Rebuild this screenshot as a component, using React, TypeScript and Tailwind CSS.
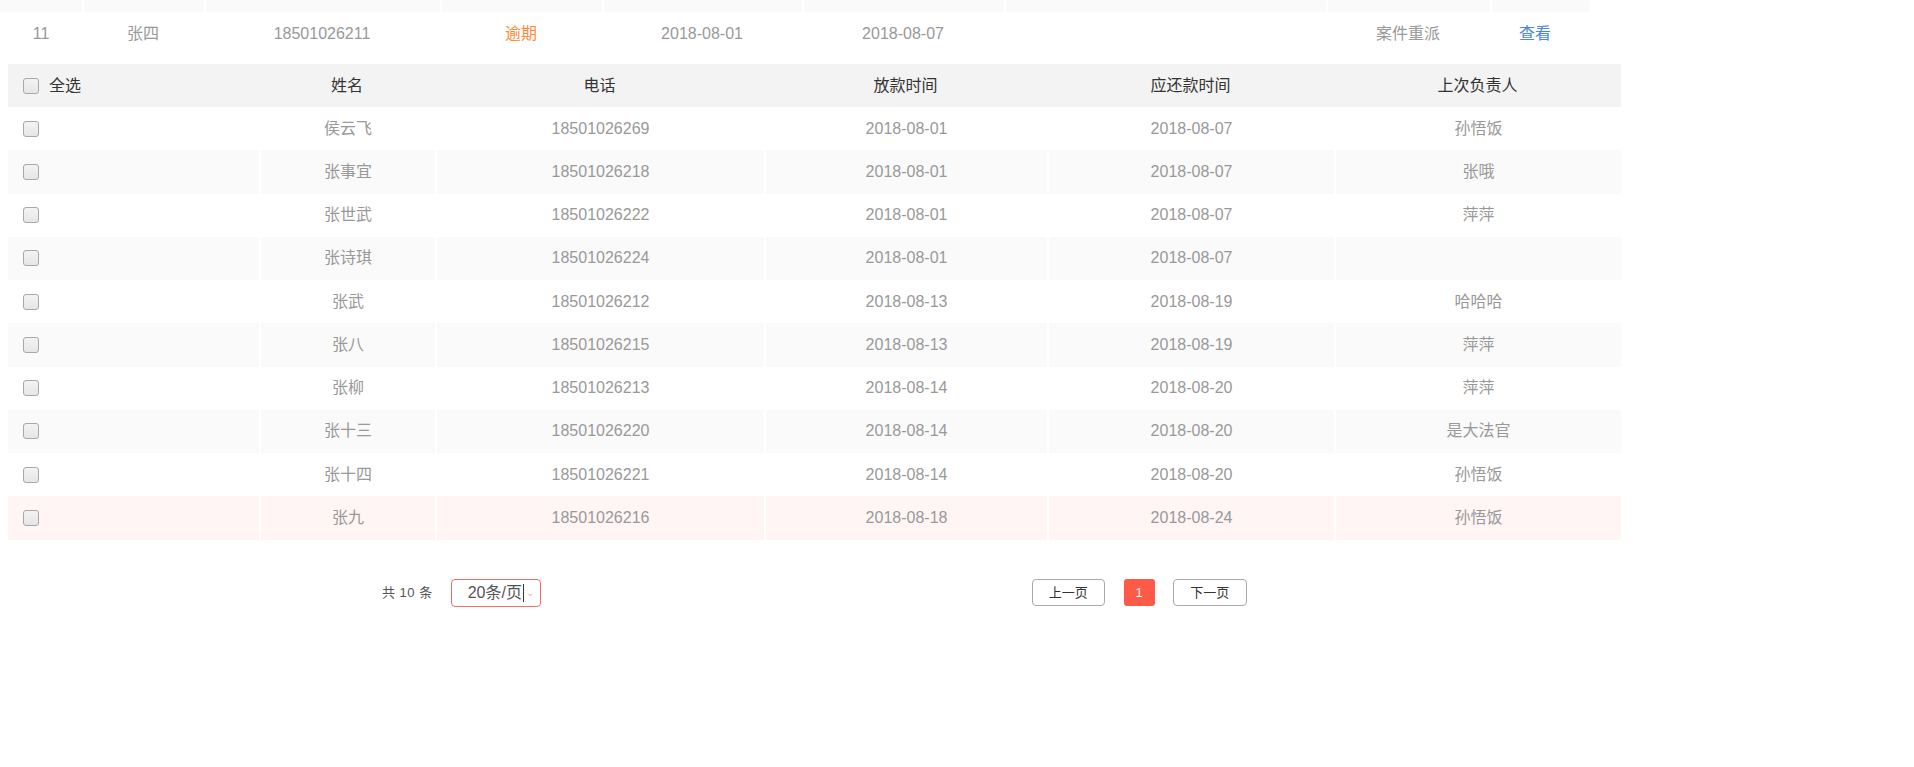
import React from "react";

const FONT = {
  fontFamily: '"Liberation Sans", "Noto Sans CJK SC", sans-serif',
};

const TOP_COLS = "grid-cols-[82px_122px_236px_162px_200px_202px_322px_164px_99px]";
const COLS = "grid-cols-[251px_176px_329px_283px_287px_287px]";

type Row = {
  name: string;
  phone: string;
  loan: string;
  due: string;
  last: string;
};

const ROWS: Row[] = [
  { name: "侯云飞", phone: "18501026269", loan: "2018-08-01", due: "2018-08-07", last: "孙悟饭" },
  { name: "张事宜", phone: "18501026218", loan: "2018-08-01", due: "2018-08-07", last: "张哦" },
  { name: "张世武", phone: "18501026222", loan: "2018-08-01", due: "2018-08-07", last: "萍萍" },
  { name: "张诗琪", phone: "18501026224", loan: "2018-08-01", due: "2018-08-07", last: "" },
  { name: "张武", phone: "18501026212", loan: "2018-08-13", due: "2018-08-19", last: "哈哈哈" },
  { name: "张八", phone: "18501026215", loan: "2018-08-13", due: "2018-08-19", last: "萍萍" },
  { name: "张柳", phone: "18501026213", loan: "2018-08-14", due: "2018-08-20", last: "萍萍" },
  { name: "张十三", phone: "18501026220", loan: "2018-08-14", due: "2018-08-20", last: "是大法官" },
  { name: "张十四", phone: "18501026221", loan: "2018-08-14", due: "2018-08-20", last: "孙悟饭" },
  { name: "张九", phone: "18501026216", loan: "2018-08-18", due: "2018-08-24", last: "孙悟饭" },
];

function Checkbox() {
  return (
    <span className="inline-block h-[16px] w-[16px] shrink-0 rounded-[3px] border border-[#a8a8a8] bg-gradient-to-b from-[#f3f3f3] to-[#e6e6e6]" />
  );
}

function TopStrip() {
  return (
    <div className={`grid ${TOP_COLS} h-[12px] w-[1589px]`}>
      {Array.from({ length: 9 }).map((_, i) => (
        <div key={i} className="border-l-2 border-white bg-[#fafafa] first:border-l-0" />
      ))}
    </div>
  );
}

function TopRow() {
  return (
    <div className={`grid ${TOP_COLS} h-[43px] w-[1589px] items-center text-center text-[16px] text-[#999]`}>
      <div>11</div>
      <div>张四</div>
      <div>18501026211</div>
      <div className="text-[#ff8a3a]">逾期</div>
      <div>2018-08-01</div>
      <div>2018-08-07</div>
      <div />
      <div>案件重派</div>
      <div className="pr-[9px] text-[#4a86e8]">查看</div>
    </div>
  );
}

function DataRow({ row, index }: { row: Row; index: number }) {
  const last = index === ROWS.length - 1;
  const bg = last ? "bg-[#fff5f5]" : index % 2 === 1 ? "bg-[#fafafa]" : "bg-white";
  const cell = "flex h-full items-center justify-center border-l-2 border-white";
  return (
    <div className={`grid ${COLS} h-[43.25px] text-[16px] text-[#999]`}>
      <div className={`flex h-full items-center pl-[15px] ${bg}`}>
        <Checkbox />
      </div>
      <div className={`${cell} ${bg}`}>{row.name}</div>
      <div className={`${cell} ${bg}`}>{row.phone}</div>
      <div className={`${cell} ${bg}`}>{row.loan}</div>
      <div className={`${cell} ${bg}`}>{row.due}</div>
      <div className={`${cell} ${bg}`}>{row.last}</div>
    </div>
  );
}

function Pagination() {
  return (
    <div className="mt-[39px] flex items-center pl-[382px] text-[#555]">
      <span className="text-[13px] tracking-[0.5px]">共 10 条</span>
      <div className="ml-[18px] flex h-[28px] w-[90px] items-center rounded-[4px] border border-[#f0705f] pl-[16px] text-[16px] text-[#555]">
        <span>20条/页</span>
        <span className="ml-[1px] h-[18px] w-[1px] bg-[#333]" />
        <span className="ml-[2px] text-[10px] text-[#c8c8c8]">⌄</span>
      </div>
      <button className="ml-[491px] flex h-[27px] w-[73px] items-center justify-center rounded-[4px] border border-[#aaa] bg-white text-[13px] text-[#333]">
        上一页
      </button>
      <span className="ml-[19px] flex h-[27px] w-[31px] items-center justify-center rounded-[3px] bg-[#ff5a47] text-[13px] text-white">
        1
      </span>
      <button className="ml-[18px] flex h-[27px] w-[74px] items-center justify-center rounded-[4px] border border-[#aaa] bg-white text-[13px] text-[#333]">
        下一页
      </button>
    </div>
  );
}

export default function App() {
  return (
    <div className="h-[767px] w-[1914px] overflow-hidden bg-white" style={FONT}>
      <TopStrip />
      <TopRow />
      <div className="ml-[8px] mt-[9px] w-[1613px]">
        <div className={`grid ${COLS} h-[43px] items-center bg-[#f3f3f3] text-[16px] text-[#333]`}>
          <div className="flex items-center gap-[10px] pl-[15px]">
            <Checkbox />
            <span>全选</span>
          </div>
          <div className="text-center">姓名</div>
          <div className="text-center">电话</div>
          <div className="text-center">放款时间</div>
          <div className="text-center">应还款时间</div>
          <div className="text-center">上次负责人</div>
        </div>
        {ROWS.map((row, i) => (
          <DataRow key={row.phone} row={row} index={i} />
        ))}
      </div>
      <Pagination />
    </div>
  );
}
